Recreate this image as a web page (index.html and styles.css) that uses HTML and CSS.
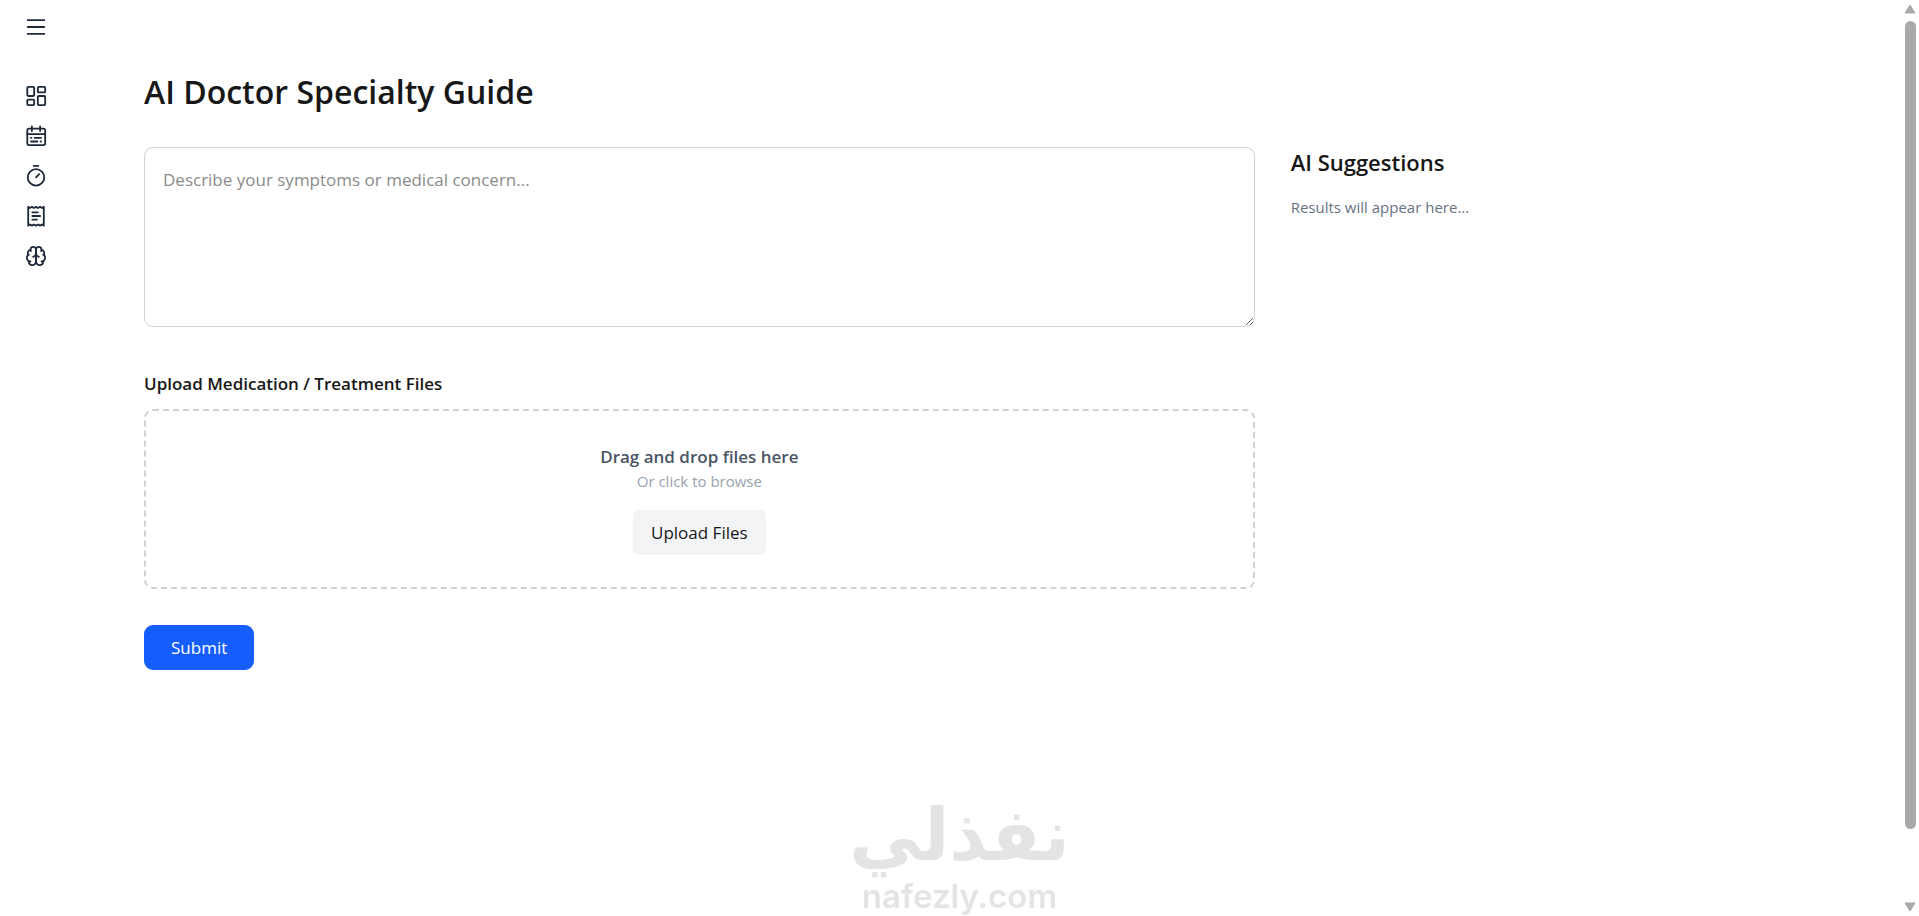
FILE: index.html
```html
<!DOCTYPE html>
<html lang="en">
<head>
    <meta charset="UTF-8">
    <meta name="viewport" content="width=device-width, initial-scale=1.0">
    <title>AI Doctor Specialty Guide</title>
    <link rel="stylesheet" href="styles.css">
</head>
<body>
    <div class="layout">
        <!-- Sidebar -->
        <aside class="sidebar">
            <button type="button" class="menu-toggle" aria-label="Menu">
                <svg class="icon" viewBox="0 0 24 24"><path d="M3 4.500h18M3 12h18M3 19.500h18"/></svg>
            </button>
            <nav class="nav">
                <a href="#" aria-label="Dashboard">
                    <svg class="icon" viewBox="0 0 24 24">
                        <rect x="2.500" y="2" width="7.500" height="10" rx="1"/>
                        <rect x="14" y="2" width="8" height="6" rx="1"/>
                        <rect x="2.500" y="16" width="7.500" height="6" rx="1"/>
                        <rect x="14" y="12" width="8" height="10" rx="1"/>
                    </svg>
                </a>
                <a href="#" aria-label="Appointments">
                    <svg class="icon" viewBox="0 0 24 24">
                        <rect x="2.500" y="4" width="19.500" height="18" rx="2"/>
                        <path d="M2.500 10h19.500M7.500 1.500v5M16.500 1.500v5M6.500 14h.5M10.500 14h7M6.500 18h7M17 18h.5"/>
                    </svg>
                </a>
                <a href="#" aria-label="Timer">
                    <svg class="icon" viewBox="0 0 24 24">
                        <circle cx="12" cy="13.500" r="9"/>
                        <path d="M9.500 1h5M12 13.500l3.500-3.500"/>
                    </svg>
                </a>
                <a href="#" aria-label="Reports">
                    <svg class="icon" viewBox="0 0 24 24">
                        <path d="M3.500 2l1.800 1.300L7.500 2l2.200 1.300L12 2l2.300 1.300L16.500 2l2.200 1.300L20.500 2v20.500l-1.800-1.300-2.200 1.300-2.200-1.300-2.300 1.300-2.300-1.300-2.200 1.300-2.200-1.300-1.800 1.300z"/>
                        <path d="M8 8h6M8 12h8.500M8 16h5"/>
                    </svg>
                </a>
                <a href="#" aria-label="AI Guide">
                    <svg class="icon" viewBox="0 0 24 24">
                        <path d="M12 5a3 3 0 1 0-5.997.125 4 4 0 0 0-2.526 5.770 4 4 0 0 0 .556 6.588A4 4 0 1 0 12 18z"/>
                        <path d="M12 5a3 3 0 1 1 5.997.125 4 4 0 0 1 2.526 5.770 4 4 0 0 1-.556 6.588A4 4 0 1 1 12 18z"/>
                        <path d="M15 13a4.500 4.500 0 0 1-3-4 4.500 4.500 0 0 1-3 4M6 5.100c0 .6.200 1 .4 1.400M17.600 6.500c.3-.5.400-.9.400-1.400M3.500 10.900c.2-.2.400-.3.600-.4M19.900 10.500c.2.100.4.200.6.400M6 18c-.7 0-1.400-.2-2-.5M20 17.500c-.6.300-1.300.5-2 .5"/>
                    </svg>
                </a>
            </nav>
        </aside>

        <!-- Main content -->
        <main class="content">
            <h1>AI Doctor Specialty Guide</h1>
            <div class="columns">
                <form class="guide-form">
                    <textarea class="symptoms" aria-label="Symptoms" placeholder="Describe your symptoms or medical concern..."></textarea>

                    <section class="upload">
                        <h2>Upload Medication / Treatment Files</h2>
                        <div class="dropzone">
                            <p class="drop-title">Drag and drop files here</p>
                            <p class="drop-hint">Or click to browse</p>
                            <button type="button" class="upload-btn">Upload Files</button>
                        </div>
                    </section>

                    <button type="submit" class="submit-btn">Submit</button>
                </form>

                <section class="suggestions">
                    <h2>AI Suggestions</h2>
                    <p>Results will appear here...</p>
                </section>
            </div>
        </main>
    </div>

    <!-- Watermark -->
    <div class="watermark">
        <span class="watermark-ar" lang="ar" dir="rtl">نفذلي</span>
        <span class="watermark-en">nafezly.com</span>
    </div>

    <!-- Scrollbar -->
    <div class="scrollbar" aria-hidden="true">
        <svg class="arrow" viewBox="0 0 12 10"><path d="M6 1l5 8H1z"/></svg>
        <div class="thumb"></div>
        <svg class="arrow" viewBox="0 0 12 10"><path d="M6 9l5-8H1z"/></svg>
    </div>
</body>
</html>
```

FILE: styles.css
```css
* {
    box-sizing: border-box;
}
body {
    margin: 0;
    padding-right: 19px;
    font-family: "Open Sans", sans-serif;
    font-size: 17px;
    line-height: 27px;
    color: #171717;
    background-color: #fff;
}
h1, h2, p {
    margin: 0;
}
button, textarea {
    font: inherit;
}
button {
    border: none;
    cursor: pointer;
}
.layout {
    display: flex;
    min-height: 100vh;
}

/* Sidebar */
.sidebar {
    width: 72px;
    padding-top: 16px;
    display: flex;
    flex-direction: column;
    align-items: center;
    gap: 47px;
}
.menu-toggle {
    display: flex;
    padding: 0;
    background: none;
}
.nav {
    display: flex;
    flex-direction: column;
    gap: 18px;
}
.nav a {
    display: flex;
}
.icon {
    width: 22px;
    height: 22px;
    fill: none;
    stroke: #1e2939;
    stroke-width: 2;
    stroke-linecap: round;
    stroke-linejoin: round;
    overflow: visible;
}

/* Main content */
.content {
    flex: 1;
    padding: 72px;
}
h1 {
    margin-bottom: 35px;
    font-size: 32px;
    font-weight: 600;
    line-height: 40px;
}
.columns {
    display: grid;
    grid-template-columns: repeat(3, 1fr);
    gap: 36px;
}
.guide-form {
    grid-column: span 2;
}
.symptoms {
    display: block;
    width: 100%;
    height: 180px;
    padding: 18px;
    border: 1px solid #d1d1d1;
    border-radius: 9px;
    color: inherit;
    background-color: #fff;
    resize: vertical;
}
.symptoms::placeholder {
    color: #8b8b8b;
}
.upload {
    margin: 43px 0 36px;
}
.upload h2 {
    margin-bottom: 12px;
    font-size: 17px;
    font-weight: 600;
    line-height: 27px;
}
.dropzone {
    display: flex;
    flex-direction: column;
    align-items: center;
    padding: 32px;
    border: 2px dashed #d1d1d1;
    border-radius: 9px;
}
.drop-title {
    font-size: 17px;
    font-weight: 600;
    color: #4a5565;
}
.drop-hint {
    margin-bottom: 18px;
    font-size: 15px;
    line-height: 22px;
    color: #99a1af;
}
.upload-btn {
    padding: 9px 18px;
    border-radius: 6px;
    color: #171717;
    background-color: #f3f4f6;
}
.submit-btn {
    padding: 9px 27px;
    border-radius: 9px;
    color: #fff;
    background-color: #155dfc;
}
.suggestions h2 {
    margin-bottom: 18px;
    font-size: 22px;
    font-weight: 600;
    line-height: 31px;
}
.suggestions p {
    font-size: 15px;
    line-height: 22px;
    color: #6a7282;
}

/* Watermark */
.watermark {
    position: fixed;
    left: 50%;
    bottom: 0;
    transform: translateX(-50%);
    display: flex;
    flex-direction: column;
    align-items: center;
    color: #e4e4e4;
    font-weight: 700;
    pointer-events: none;
}
.watermark-ar {
    font-family: "DejaVu Sans", sans-serif;
    font-size: 72px;
    line-height: 82px;
}
.watermark-en {
    font-family: "Inter", sans-serif;
    font-size: 33px;
    font-weight: 600;
    line-height: 40px;
}

/* Scrollbar */
.scrollbar {
    position: fixed;
    top: 0;
    right: 0;
    bottom: 0;
    width: 18px;
    padding: 4px 0;
    display: flex;
    flex-direction: column;
    align-items: center;
    gap: 7px;
}
.arrow {
    width: 12px;
    height: 10px;
    fill: #a9a9a9;
    stroke: #a9a9a9;
    stroke-linejoin: round;
}
.thumb {
    width: 11px;
    height: 89%;
    border-radius: 6px;
    background-color: #a9a9a9;
}
.arrow:last-child {
    margin-top: auto;
}
```
